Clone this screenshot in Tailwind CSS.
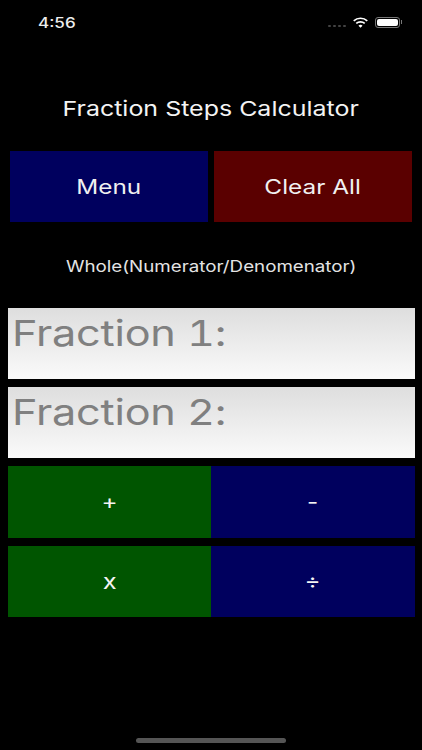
<!DOCTYPE html>
<html lang="en">
<head>
  <meta charset="UTF-8" />
  <title>Fraction Steps Calculator</title>
  <script src="https://cdn.jsdelivr.net/npm/@tailwindcss/browser@4"></script>
</head>
<body class="bg-black">
<div class="w-[422px] h-[750px] bg-black text-white font-['Inter','Roboto',sans-serif] overflow-hidden flex flex-col">

  <!-- Status bar -->
  <div class="h-[44px] flex items-center justify-between pl-[38px] pr-[20px] shrink-0">
    <span class="inline-block origin-left scale-x-[1.218] text-[14px] font-medium text-[#eeeeee]">4:56</span>
    <div class="flex items-center">
      <div class="flex gap-[2px] mr-[6px] mt-[7px]">
        <span class="w-[3px] h-[2px] rounded-full bg-[#444]"></span>
        <span class="w-[3px] h-[2px] rounded-full bg-[#444]"></span>
        <span class="w-[3px] h-[2px] rounded-full bg-[#444]"></span>
        <span class="w-[3px] h-[2px] rounded-full bg-[#444]"></span>
      </div>
      <svg width="17" height="11" viewBox="0 0 18 13" class="mr-[6px]">
        <path d="M1 4.6C5.5 .4 12.5 .4 17 4.6" fill="none" stroke="#fff" stroke-width="2"/>
        <path d="M4 7.6C6.8 5.1 11.2 5.1 14 7.6" fill="none" stroke="#fff" stroke-width="2"/>
        <path d="M6.6 10.2L9 12.6L11.4 10.2C10 9 8 9 6.6 10.2Z" fill="#fff"/>
      </svg>
      <div class="w-[25px] h-[11px] rounded-[3px] border border-[#777] p-[1px]">
        <div class="w-full h-full rounded-[2px] bg-white"></div>
      </div>
      <span class="w-[1px] h-[4px] bg-[#777] ml-[1px]"></span>
    </div>
  </div>

  <!-- Title -->
  <div class="mt-[50px] h-[30px] flex items-center justify-center">
    <h1 class="scale-x-[1.218] text-[20.5px] leading-[30px] font-normal text-[#f4f4f4]">Fraction Steps Calculator</h1>
  </div>

  <!-- Top buttons -->
  <div class="mt-[26.5px] ml-[10px] w-[402px] h-[71.3px] flex gap-[6px] shrink-0">
    <div class="flex-1 bg-[#00005e] flex items-center justify-center pt-[1px] text-[#f0f0f0]">
      <span class="scale-x-[1.218] text-[20px]">Menu</span>
    </div>
    <div class="flex-1 bg-[#5a0000] flex items-center justify-center pt-[1px] text-[#f0f0f0]">
      <span class="scale-x-[1.218] text-[20px]">Clear All</span>
    </div>
  </div>

  <div class="mt-[33px] h-[24px] flex items-center justify-center">
    <p class="scale-x-[1.218] text-[15.4px] leading-[24px] text-[#e4e4e4]">Whole(Numerator/Denomenator)</p>
  </div>

  <!-- Inputs -->
  <div class="mt-[29px] ml-[7.5px] w-[407px] flex flex-col gap-[8px]">
    <div class="h-[71.3px] bg-gradient-to-b from-[#dedede] to-[#fafafa] pl-[4.5px] pt-[2px] leading-[48px] text-[#808080]">
      <span class="inline-block origin-left scale-x-[1.218] text-[35.5px] tracking-[-0.2px] [font-feature-settings:'calt'_0,'tnum'_1]">Fraction 1:</span>
    </div>
    <div class="h-[71.3px] bg-gradient-to-b from-[#dedede] to-[#fafafa] pl-[4.5px] pt-[2px] leading-[48px] text-[#808080]">
      <span class="inline-block origin-left scale-x-[1.218] text-[35.5px] tracking-[-0.2px] [font-feature-settings:'calt'_0,'tnum'_1]">Fraction 2:</span>
    </div>
  </div>

  <!-- Operators -->
  <div class="mt-[8px] ml-[7.5px] w-[407px] grid grid-cols-2 gap-y-[8px]">
    <div class="h-[71.3px] bg-[#005500] flex items-center justify-center text-[#f4f4f4]"><span class="scale-x-[1.218] text-[20px]">+</span></div>
    <div class="h-[71.3px] bg-[#00005e] flex items-center justify-center text-[#f4f4f4]"><span class="scale-x-[1.218] text-[20px]">-</span></div>
    <div class="h-[71.3px] bg-[#005500] flex items-center justify-center text-[#f4f4f4]"><span class="scale-x-[1.218] text-[21px]">x</span></div>
    <div class="h-[71.3px] bg-[#00005e] flex items-center justify-center text-[#f4f4f4]"><span class="scale-x-[1.218] text-[20px]">÷</span></div>
  </div>

  <!-- Home indicator -->
  <div class="mt-auto mb-[7px] mx-auto w-[150px] h-[5px] rounded-full bg-[#555]"></div>
</div>
</body>
</html>
